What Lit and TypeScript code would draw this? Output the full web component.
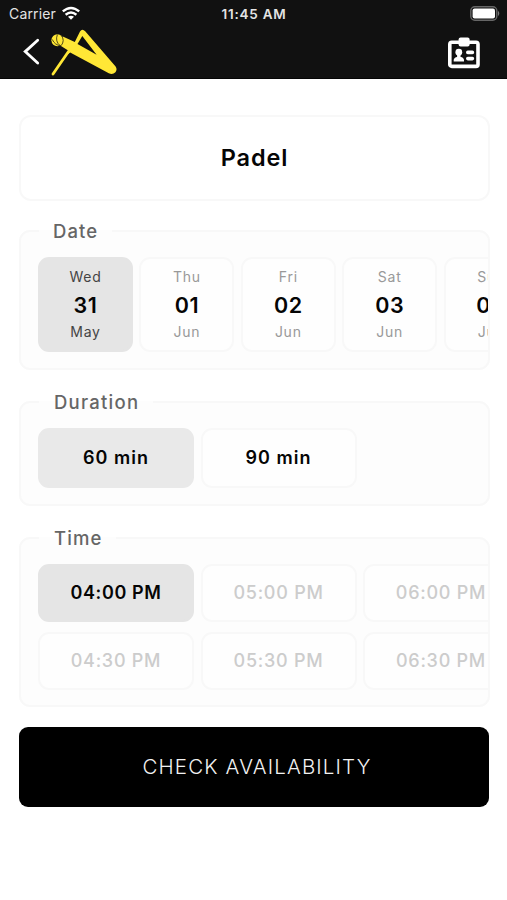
import { LitElement, html, css, svg } from "lit";
import { customElement, property } from "lit/decorators.js";

@customElement("option-group")
class OptionGroup extends LitElement {
  @property() label = "";

  static styles = css`
    :host { display: block; }
    fieldset {
      box-sizing: border-box;
      height: 100%;
      min-width: 0;
      margin: 0;
      padding: 13px 0 0 17px;
      border: 2px solid #f8f8f8;
      border-radius: 11px;
      background: #fdfdfd;
    }
    legend {
      box-sizing: border-box;
      height: 26px;
      padding: 0 14px 0 var(--legend-start, 14px);
      margin-left: 1px;
      font-size: 18.5px;
      font-weight: 500;
      line-height: 26px;
      letter-spacing: var(--legend-spacing, 1.1px);
      color: #666;
    }
    .track { overflow: hidden; }
  `;

  render() {
    return html`<fieldset>
      <legend>${this.label}</legend>
      <div class="track"><slot></slot></div>
    </fieldset>`;
  }
}

@customElement("app-root")
class AppRoot extends LitElement {
  static styles = css`
    :host {
      display: block;
      height: 900px;
      overflow: hidden;
      background: #fff;
      font-family: Inter, "Liberation Sans", sans-serif;
      color: #050505;
    }
    header {
      box-sizing: border-box;
      height: 79px;
      background: #111;
      color: #e4e4e4;
      border-bottom: 1px solid #050505;
    }
    .status {
      display: grid;
      grid-template-columns: 1fr auto 1fr;
      align-items: center;
      height: 27px;
      padding: 0 6px 0 9px;
    }
    .carrier { display: flex; align-items: center; gap: 6px; font-size: 14px; letter-spacing: 0.15px; }
    .clock { font-size: 13.5px; font-weight: 600; letter-spacing: 0.75px; margin-right: 2px; }
    .battery { justify-self: end; }
    .nav { display: flex; align-items: center; height: 51px; padding: 0 26px 0 22px; }
    .logo { margin-left: 8px; }
    .badge { margin-left: auto; }
    svg { display: block; }

    main { display: flex; flex-direction: column; padding: 36px 17px 0 19px; }
    .sport {
      box-sizing: border-box;
      height: 86px;
      display: flex;
      align-items: center;
      justify-content: center;
      border: 2px solid #f8f8f8;
      border-radius: 12px;
      font-size: 23.5px;
      font-weight: 600;
      letter-spacing: 0.9px;
      padding-bottom: 2px;
    }
    .date { height: 152px; margin-top: 17px; }
    .duration { height: 117px; margin-top: 19px; --legend-spacing: 1.25px; --legend-start: 15px; }
    .time { height: 182px; margin-top: 19px; --legend-start: 15px; }
    .days { display: grid; grid-template-columns: repeat(5, 95px); column-gap: 6.4px; }
    .slots { display: grid; grid-template-columns: repeat(3, 156px); gap: 10px 6.5px; }
    .day, .slot {
      box-sizing: border-box;
      display: flex;
      align-items: center;
      justify-content: center;
      border: 2px solid #f8f8f8;
      border-radius: 11px;
      background: #fefefe;
    }
    .day { height: 95px; flex-direction: column; color: #999; font-size: 14px; line-height: 20px; letter-spacing: 0.75px; padding-bottom: 1px; }
    .number { font-size: 21.5px; font-weight: 600; line-height: 35px; color: #050505; letter-spacing: 0.5px; position: relative; top: 1px; }
    .slot { height: 58px; font-size: 18px; font-weight: 600; letter-spacing: 0.6px; padding-bottom: 1px; }
    .length { height: 60px; letter-spacing: 1.05px; }
    .muted { color: #ccc; font-weight: 500; letter-spacing: 0.75px; }
    .on { background: #e5e5e5; border-color: #e5e5e5; color: #444; }
    .slot.on { color: #050505; }
    .length.on { background: #e9e9e9; border-color: #e9e9e9; }
    button {
      width: 470px;
      height: 80px;
      margin-top: 20px;
      padding: 0 0 1px 6px;
      border: 0;
      border-radius: 9px;
      background: #000;
      color: #f2f2f2;
      font: 300 20.5px Inter, "Liberation Sans", sans-serif;
      letter-spacing: 1.15px;
    }
  `;

  private days = [
    ["Wed", "31", "May"],
    ["Thu", "01", "Jun"],
    ["Fri", "02", "Jun"],
    ["Sat", "03", "Jun"],
    ["Sun", "04", "Jun"],
  ];
  private lengths = ["60 min", "90 min"];
  private times = ["04:00 PM", "05:00 PM", "06:00 PM", "04:30 PM", "05:30 PM", "06:30 PM"];

  private wifi = svg`
    <g fill="none" stroke="#fff" stroke-width="2.4">
      <path d="M0.8 5Q9 -2 17.2 5"/><path d="M3.6 8.3Q9 3.9 14.4 8.3"/>
    </g>
    <path d="M9 13.4L6 10.4Q9 8.1 12 10.4Z" fill="#fff"/>`;

  render() {
    return html`
      <header>
        <div class="status">
          <div class="carrier">
            <span>Carrier</span>
            <svg width="18" height="16" viewBox="0 -0.4 18 16">${this.wifi}</svg>
          </div>
          <span class="clock">11:45 AM</span>
          <svg class="battery" width="31" height="15" viewBox="0 0 31 15">
            <rect x="0.8" y="0.8" width="26" height="13.4" rx="4" fill="none" stroke="#666" stroke-width="1.4"/>
            <rect x="2.6" y="2.6" width="22.4" height="9.8" rx="2" fill="#fff"/>
            <path d="M28 4.8Q30.6 7.5 28 10.2Z" fill="#777"/>
          </svg>
        </div>
        <div class="nav">
          <svg width="20" height="30" viewBox="0 0 20 30">
            <path d="M15.7 2.2L3.2 13.6L15.7 25" fill="none" stroke="#fff" stroke-width="2.8" stroke-linecap="round"/>
          </svg>
          <svg class="logo" width="68" height="50" viewBox="0 0 68 50">
            <path d="M3 46L18.5 23.5" stroke="#ffe736" stroke-width="2.8" stroke-linecap="round"/>
            <path fill="#ffe736" fill-rule="evenodd" d="M12.8 8.6L24.8 14L30 3.4Q32.2 0 35.2 3.2L65.6 38.6Q67.6 41.6 65.4 44.2Q62.6 47 58.8 45.2L20.2 24.4L17.5 26.6L18.2 22.6L10.6 17.8Q10.8 12.5 12.8 8.6ZM32.3 8L27.5 16L46.6 26.8Z"/>
            <circle cx="7.4" cy="12.3" r="6" fill="#ffe736"/>
            <g fill="none" stroke="#3f3a12" stroke-width="0.9">
              <path d="M11.2 7.2Q15.2 12.5 11.2 17.6"/>
              <path d="M7.4 6.5Q4.8 13.6 10.2 17.6"/>
              <path d="M2.2 11.4Q4.8 17.2 10.8 17.8"/>
            </g>
          </svg>
          <svg class="badge" width="34" height="32" viewBox="0 0 34 32">
            <rect x="2.8" y="5.2" width="28.2" height="24.2" rx="2" fill="none" stroke="#fff" stroke-width="3.6"/>
            <rect x="11.6" y="0.6" width="11" height="9" rx="2" fill="#fff"/>
            <circle cx="11.8" cy="15.2" r="3.4" fill="#fff"/>
            <path d="M6.7 24.6V22.8Q7.4 20 11.8 19.8T17 22.8V24.6Z" fill="#fff"/>
            <path d="M10.1 17h3.4v4h-3.4z" fill="#fff"/>
            <path d="M20.8 15.4h4.6M20.8 21.6h4.6" stroke="#fff" stroke-width="3.6" stroke-linecap="round"/>
          </svg>
        </div>
      </header>
      <main>
        <div class="sport">Padel</div>
        <option-group class="date" label="Date">
          <div class="days">
            ${this.days.map(
              ([name, number, month], i) => html`<div class="day ${i === 0 ? "on" : ""}">
                <span>${name}</span><span class="number">${number}</span><span>${month}</span>
              </div>`
            )}
          </div>
        </option-group>
        <option-group class="duration" label="Duration">
          <div class="slots">
            ${this.lengths.map((l, i) => html`<div class="slot length ${i === 0 ? "on" : ""}">${l}</div>`)}
          </div>
        </option-group>
        <option-group class="time" label="Time">
          <div class="slots">
            ${this.times.map((t, i) => html`<div class="slot ${i === 0 ? "on" : "muted"}">${t}</div>`)}
          </div>
        </option-group>
        <button>CHECK AVAILABILITY</button>
      </main>
    `;
  }
}
